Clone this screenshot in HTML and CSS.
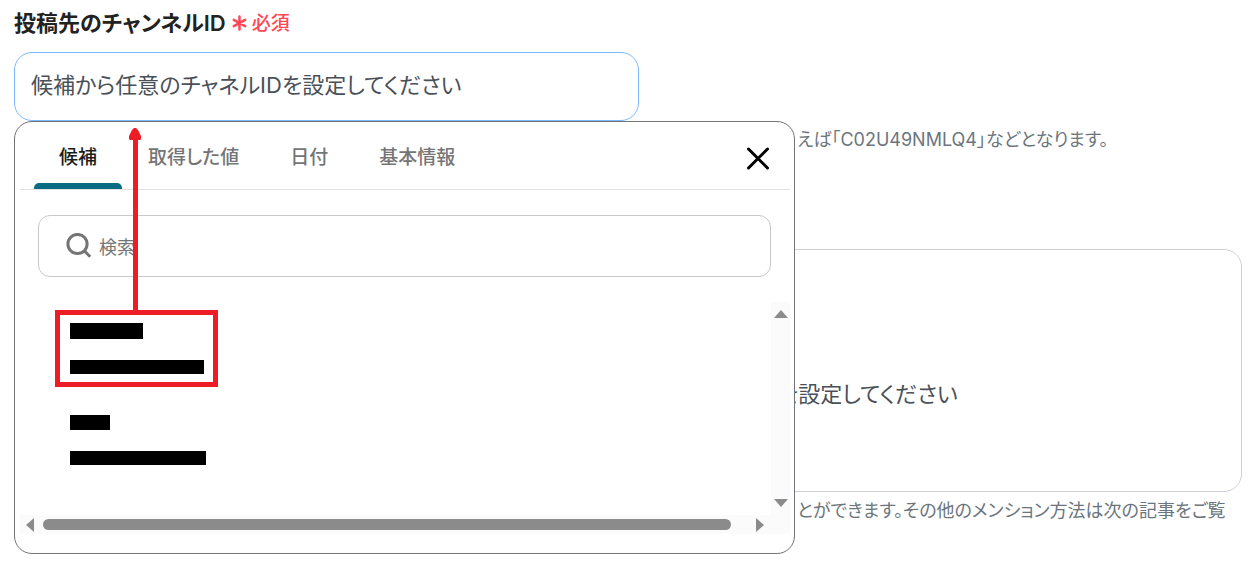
FILE: index.html
```html
<!DOCTYPE html>
<html lang="ja">
<head>
<meta charset="utf-8">
<title>投稿先のチャンネルID</title>
<link rel="stylesheet" href="styles.css">
</head>
<body>
<main class="form">
  <section class="field">
    <div class="field-head">
      <label class="field-label" for="channel">投稿先のチャンネルID</label>
      <span class="required">
        <svg class="asterisk" viewBox="0 0 15 20" aria-hidden="true"><path d="M7.500 5.500v13M1.800 8.800l11.400 6.400M13.200 8.800L1.800 15.200"/></svg>
        必須
      </span>
    </div>
    <div class="combo">
      <input class="text-input" id="channel" type="text" placeholder="候補から任意のチャネルIDを設定してください">
      <div class="popup">
        <header class="popup-head">
          <nav class="tabs">
            <button class="tab tab-active" type="button">候補</button>
            <button class="tab" type="button">取得した値</button>
            <button class="tab" type="button">日付</button>
            <button class="tab" type="button">基本情報</button>
          </nav>
          <button class="close" type="button" aria-label="閉じる">
            <svg viewBox="0 0 24 24" aria-hidden="true"><path d="M2.500 2l19 19M21.500 2l-19 19"/></svg>
          </button>
        </header>
        <label class="search">
          <svg class="search-icon" viewBox="0 0 26 26" aria-hidden="true"><circle cx="11.500" cy="11" r="9.600"/><path d="M18 17.500l6.200 6.200"/></svg>
          <input class="search-input" type="search" placeholder="検索" aria-label="検索">
        </label>
        <div class="results">
          <ul class="options">
            <li class="option option-marked">
              <span class="mask mask-name"></span>
              <span class="mask mask-id"></span>
            </li>
            <li class="option">
              <span class="mask mask-short"></span>
              <span class="mask mask-long"></span>
            </li>
          </ul>
          <div class="bar-y">
            <svg class="arrow-y" viewBox="0 0 14 8" aria-hidden="true"><path d="M0 8L7 0l7 8z"/></svg>
            <svg class="arrow-y" viewBox="0 0 14 8" aria-hidden="true"><path d="M0 0h14L7 8z"/></svg>
          </div>
          <div class="bar-x">
            <svg class="arrow-x" viewBox="0 0 8 14" aria-hidden="true"><path d="M8 0v14L0 7z"/></svg>
            <span class="thumb"></span>
            <svg class="arrow-x" viewBox="0 0 8 14" aria-hidden="true"><path d="M0 0l8 7-8 7z"/></svg>
          </div>
        </div>
        <svg class="pointer" viewBox="0 0 12 186" aria-hidden="true"><path d="M6.500 8v178"/><path class="pointer-tip" d="M5 0h2l2 2 3 6v3l-1 1H1l-1-1V8l3-6z"/></svg>
      </div>
    </div>
    <p class="help">えば「C02U49NMLQ4」などとなります。</p>
  </section>
  <section class="field">
    <div class="message">を設定してください</div>
    <p class="help">とができます。その他のメンション方法は次の記事をご覧</p>
  </section>
</main>
</body>
</html>
```

FILE: styles.css
```css
* { box-sizing: border-box; }
body {
  margin: 0;
  background: #fff;
  color: #222;
  font-family: Inter, "Noto Sans CJK JP", sans-serif;
  font-feature-settings: "palt";
}
button, input { font: inherit; font-feature-settings: inherit; }
button { border: 0; background: none; padding: 0; }
.form {
  display: flex;
  flex-direction: column;
  gap: 95px;
  min-height: 568px;
  padding: 6px 14px;
  overflow: hidden;
}
.field { display: flex; flex-direction: column; }
.field-head {
  display: flex;
  align-items: center;
  gap: 6px;
  height: 30px;
  margin-bottom: 16px;
}
.field-label { font-size: 22px; font-weight: 600; }
.required {
  display: flex;
  align-items: center;
  gap: 5px;
  color: #ff4757;
  font-size: 19px;
  font-weight: 500;
}
.asterisk { width: 15px; height: 20px; fill: none; stroke: currentColor; stroke-width: 2.5; stroke-linecap: round; }
.combo { position: relative; }
.text-input {
  display: block;
  width: 625px;
  max-width: 100%;
  height: 69px;
  padding: 0 16px 4px;
  border: 1px solid #7ab8ff;
  border-radius: 18px;
  background: #fff;
  font-size: 22px;
}
.text-input::placeholder { color: #495057; opacity: 1; }
.popup {
  position: absolute;
  top: 100%;
  left: 0;
  z-index: 1;
  display: flex;
  flex-direction: column;
  width: 781px;
  max-width: 100%;
  padding: 0 4px 19px 5px;
  border: 1px solid #737477;
  border-radius: 18px;
  background: #fff;
}
.popup-head {
  display: flex;
  align-items: stretch;
  justify-content: space-between;
  height: 68px;
  padding: 0 20px 0 14px;
  border-bottom: 1px solid #e1e1e1;
}
.tabs { display: flex; gap: 1px; }
.tab {
  padding: 0 25px;
  color: #757575;
  font-size: 19px;
  font-weight: 500;
}
.tab-active { position: relative; color: #1b1b1b; }
.tab-active::after {
  content: "";
  position: absolute;
  inset: auto 0 0;
  height: 6px;
  border-radius: 5px 5px 0 0;
  background: #0a6c83;
}
.close { display: flex; align-items: center; padding-top: 6px; }
.close svg { width: 24px; height: 24px; fill: none; stroke: #000; stroke-width: 3; stroke-linecap: round; }
.search {
  display: flex;
  align-items: center;
  gap: 7px;
  height: 62px;
  margin: 25px 19px 25px 18px;
  padding: 0 27px;
  border: 1px solid #c8c8c8;
  border-radius: 12px;
}
.search-icon { width: 26px; height: 26px; fill: none; stroke: #757575; stroke-width: 3; }
.search-input { flex: 1; min-width: 0; padding: 2px 0 0; border: 0; background: none; font-size: 18px; }
.search-input::placeholder { color: #757575; opacity: 1; }
.results { display: grid; grid-template-columns: 1fr 19px; grid-template-rows: 213px 19px; }
.options {
  display: flex;
  flex-direction: column;
  gap: 10px;
  margin: 0;
  padding: 8px 35px;
  list-style: none;
}
.option {
  display: flex;
  flex-direction: column;
  align-self: flex-start;
  gap: 21px;
  padding: 18px 14px 13px 15px;
}
.option-marked { padding: 8px 9px 8px 10px; border: 5px solid #ee1c25; }
.mask { height: 14px; background: #000; }
.mask-name { width: 73px; height: 16px; }
.mask-short { width: 40px; height: 15px; }
.mask-id { width: 134px; }
.mask-long { width: 136px; }
.bar-y {
  display: flex;
  flex-direction: column;
  align-items: center;
  justify-content: space-between;
  padding: 8px 0;
  background: #fbfbfb;
}
.bar-x {
  grid-column: 1 / -1;
  display: flex;
  align-items: center;
  gap: 9px;
  padding: 0 26px 0 6px;
  background: #fbfbfb;
}
.arrow-y { width: 14px; height: 8px; fill: #8b8b8b; }
.arrow-x { width: 8px; height: 14px; fill: #8b8b8b; }
.thumb { flex: 1; height: 11px; margin-right: 16px; border-radius: 6px; background: #8b8b8b; }
.pointer { position: absolute; top: 6px; left: 114px; width: 12px; height: 186px; fill: none; stroke: #ee1c25; stroke-width: 5; }
.pointer-tip { fill: #ee1c25; stroke: none; }
.help {
  margin: 5px 0 0 783px;
  color: #6c757d;
  font-size: 18px;
  line-height: 28px;
  white-space: nowrap;
}
.message {
  display: flex;
  align-items: center;
  height: 243px;
  padding: 42px 0 0 763px;
  border: 1px solid #ced0d8;
  border-radius: 18px;
  color: #495057;
  font-size: 22px;
  white-space: nowrap;
}
```
